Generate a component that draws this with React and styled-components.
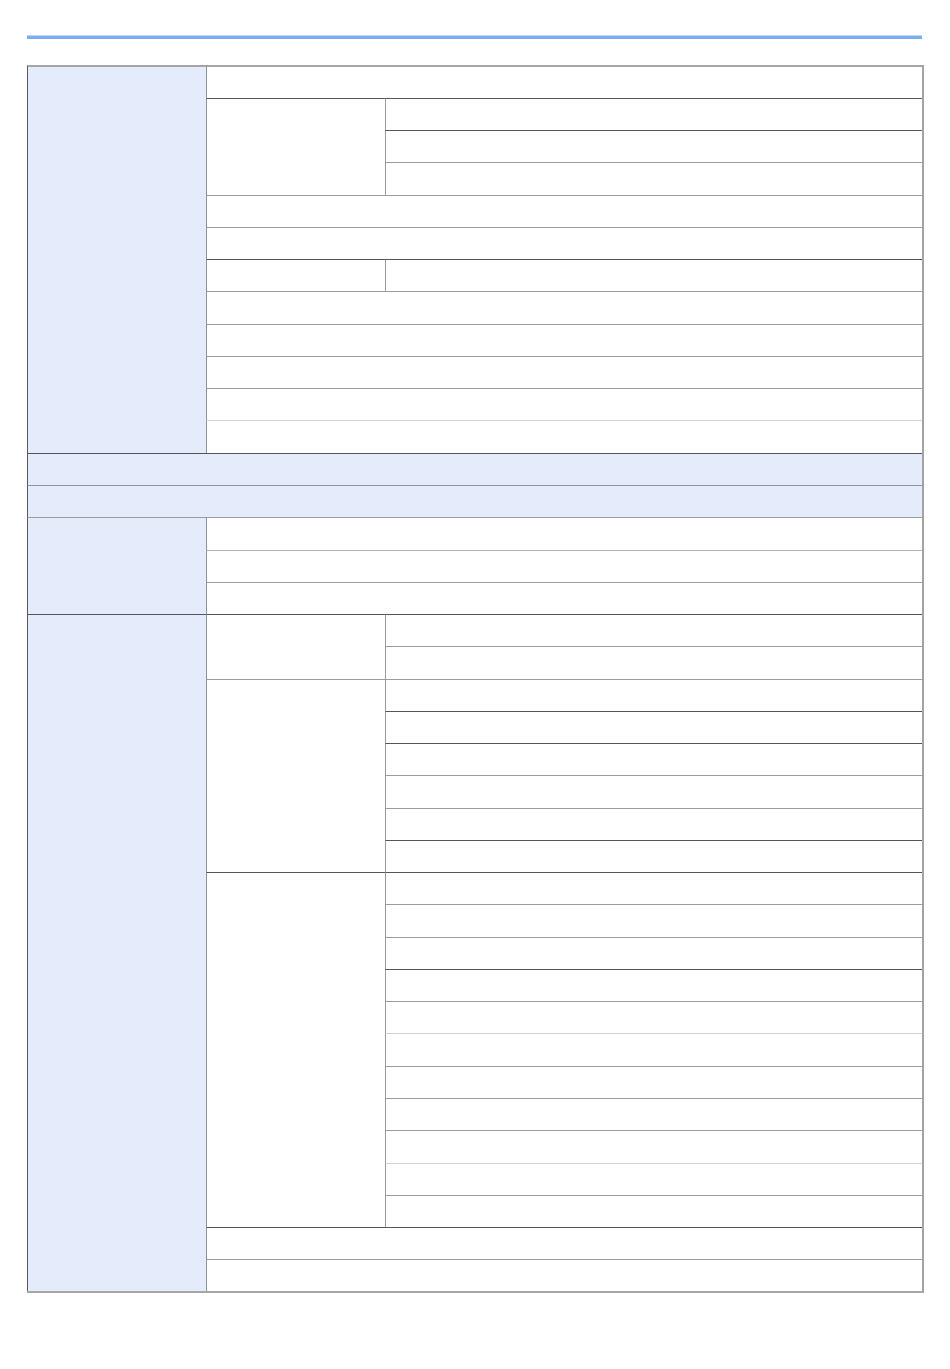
import React from 'react'
import styled, { createGlobalStyle } from 'styled-components'

const GlobalStyle = createGlobalStyle`
  html, body {
    margin: 0;
    padding: 0;
    background: #ffffff;
    font-family: "Liberation Sans", Arial, sans-serif;
  }
`

// y of every horizontal rule in the table, top to bottom
const lines = [
  65, 98, 130, 162, 195, 227, 259, 291, 324, 356, 388, 420, 453,
  485, 517, 550, 582, 614,
  646, 679, 711, 743, 775, 808, 840, 872, 904, 937, 969, 1001, 1033,
  1066, 1098, 1130, 1163, 1195, 1227, 1259, 1291
]

const DARK = '#565656'
const GRAY = '#9c9c9c'
const LIGHT = '#d2d2d2'
const BLUEGRAY = '#8c95a3'

const lineColors = [
  '#a6a6a6', DARK, DARK, GRAY, GRAY, GRAY, DARK, GRAY, GRAY, GRAY, GRAY, LIGHT, DARK,
  BLUEGRAY, GRAY, '#b4b4b4', GRAY, DARK,
  GRAY, GRAY, DARK, DARK, GRAY, GRAY, DARK, DARK, GRAY, GRAY, DARK, GRAY, LIGHT,
  GRAY, GRAY, GRAY, LIGHT, GRAY, DARK, GRAY
]

const rowHeights = lines.slice(1).map((y, i) => y - lines[i])

// row, rowSpan, col, colSpan, blue
const cells = [
  { r: 0, rs: 12, c: 1, cs: 1, blue: true },
  { r: 0, rs: 1, c: 2, cs: 2 },
  { r: 1, rs: 3, c: 2, cs: 1 },
  { r: 1, rs: 1, c: 3, cs: 1 },
  { r: 2, rs: 1, c: 3, cs: 1 },
  { r: 3, rs: 1, c: 3, cs: 1 },
  { r: 4, rs: 1, c: 2, cs: 2 },
  { r: 5, rs: 1, c: 2, cs: 2 },
  { r: 6, rs: 1, c: 2, cs: 1 },
  { r: 6, rs: 1, c: 3, cs: 1 },
  { r: 7, rs: 1, c: 2, cs: 2 },
  { r: 8, rs: 1, c: 2, cs: 2 },
  { r: 9, rs: 1, c: 2, cs: 2 },
  { r: 10, rs: 1, c: 2, cs: 2 },
  { r: 11, rs: 1, c: 2, cs: 2 },
  { r: 12, rs: 1, c: 1, cs: 3, blue: true },
  { r: 13, rs: 1, c: 1, cs: 3, blue: true },
  { r: 14, rs: 3, c: 1, cs: 1, blue: true },
  { r: 14, rs: 1, c: 2, cs: 2 },
  { r: 15, rs: 1, c: 2, cs: 2 },
  { r: 16, rs: 1, c: 2, cs: 2 },
  { r: 17, rs: 21, c: 1, cs: 1, blue: true },
  { r: 17, rs: 2, c: 2, cs: 1 },
  { r: 19, rs: 6, c: 2, cs: 1 },
  { r: 25, rs: 11, c: 2, cs: 1 },
  { r: 36, rs: 1, c: 2, cs: 2 },
  { r: 37, rs: 1, c: 2, cs: 2 }
]
for (let r = 17; r <= 35; r++) cells.push({ r, rs: 1, c: 3, cs: 1 })

const leftColors = { 1: '#5a5a5a', 2: '#8d95a1', 3: '#9a9a9a' }

function App() {
  return (
    <Page>
      <GlobalStyle />
      <TopRule />
      <Grid $rows={rowHeights}>
        {cells.map((cell, i) => (
          <Cell
            key={i}
            $row={cell.r}
            $span={cell.rs}
            $col={cell.c}
            $colSpan={cell.cs}
            $blue={cell.blue}
            $top={lineColors[cell.r]}
            $first={cell.r === 0}
            $left={leftColors[cell.c]}
          />
        ))}
      </Grid>
    </Page>
  )
}

export default App

const Page = styled.div`
  width: 950px;
  min-height: 1369px;
  padding: 35px 0 0 27px;
  box-sizing: border-box;
`

const TopRule = styled.div`
  width: 895px;
  height: 3px;
  border-top: 1px solid #bdd3f8;
  background: #7eacf4;
`

const Grid = styled.div`
  margin-top: 26px;
  display: grid;
  grid-template-columns: 179px 179px 537px;
  grid-template-rows: ${p => p.$rows.map(h => h + 'px').join(' ')};
  width: 897px;
  box-sizing: border-box;
  border-right: 2px solid #a3a3a3;
  border-bottom: 2px solid #a6a6a6;
`

const Cell = styled.div`
  grid-row: ${p => p.$row + 1} / span ${p => p.$span};
  grid-column: ${p => p.$col} / span ${p => p.$colSpan};
  box-sizing: border-box;
  background: ${p => (p.$blue ? '#e4ecfc' : '#ffffff')};
  border-top: ${p => (p.$first ? 2 : 1)}px solid ${p => p.$top};
  border-left: 1px solid ${p => p.$left};
`
